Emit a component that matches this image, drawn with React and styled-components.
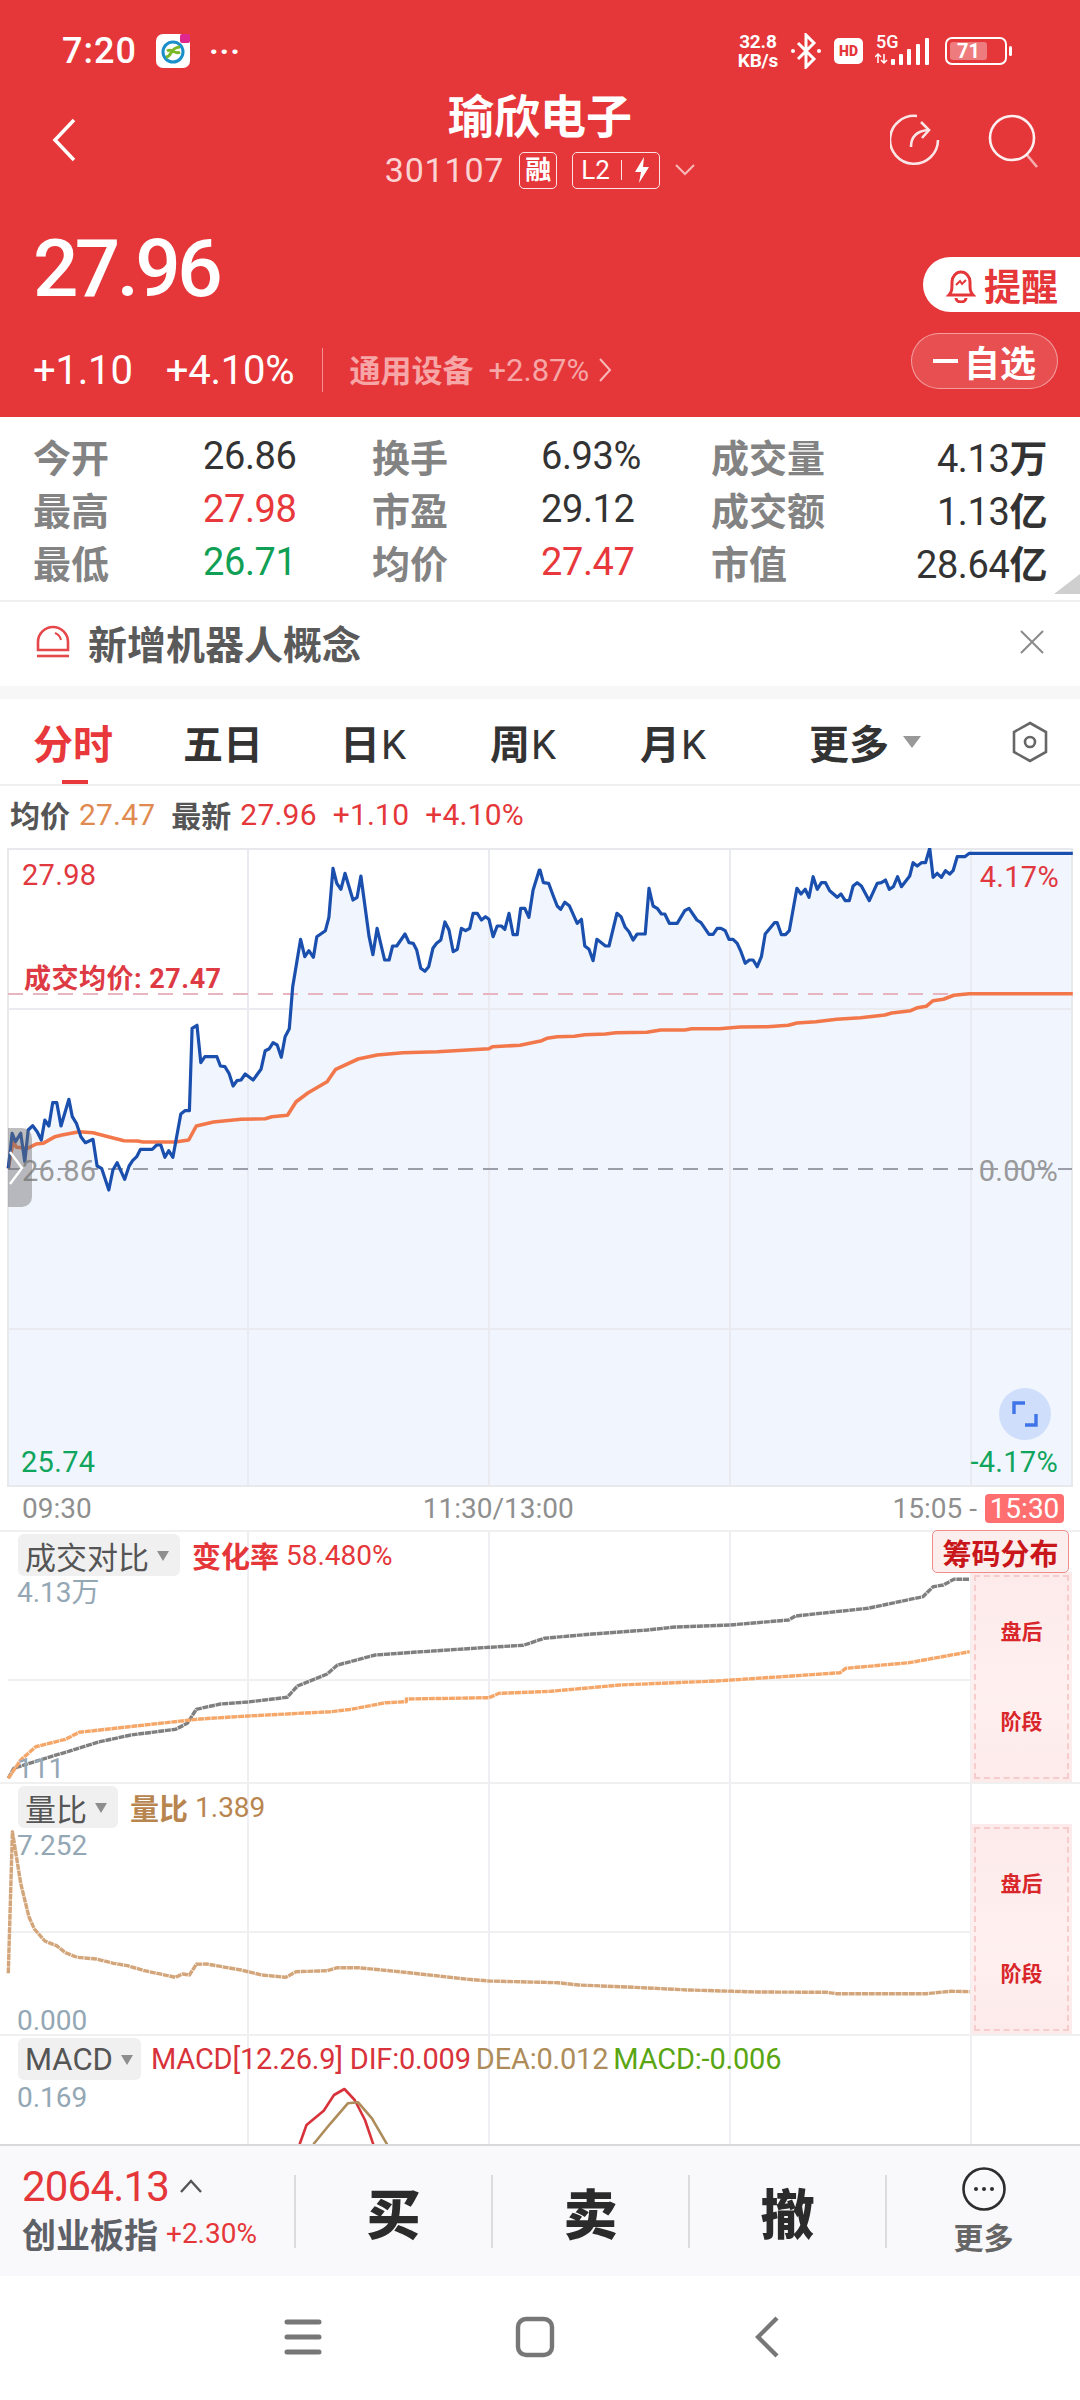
import React from 'react'
import styled, { createGlobalStyle } from 'styled-components'

const RED = '#e5373a'
const FONT = 'Roboto, "Noto Sans CJK SC", sans-serif'

const GlobalStyle = createGlobalStyle`
    html, body { margin: 0; padding: 0; background: #fff; }
    * { box-sizing: border-box; }
`

// traced from the chart, in zoom units: x / 2.9, y / 3
const blueA = [[24,985],[35,880],[45,905],[60,880],[72,965],[82,870],[95,857],[108,875],[120,900],[130,840],[142,858],[153,788],[165,788],[177,858],[200,778],[210,830],[222,850],[235,890],[248,908],[270,898],[282,978],[295,985],[316,1050],[328,990],[340,968],[362,1018],[375,978],[385,962],[397,950],[408,928],[442,928],[455,915],[467,915],[479,952],[490,932],[502,952],[525,822],[537,812],[550,812],[558,565],[572,556],[583,668],[595,650],[630,650],[640,678],[653,680],[665,700],[677,738],[688,722],[700,720],[712,702],[735,720],[758,688],[770,632],[782,626],[793,608],[805,615],[817,652],[828,590],[840,566],[850,440],[873,298],[885,350],[897,332],[910,352],[920,290],[945,272],[955,232],[967,85],[978,130],[990,148],[1002,100],[1025,180],[1037,172],[1048,108],[1072,290],[1083,344],[1095,265],[1117,360],[1130,360],[1140,318],[1152,318],[1176,282],[1188,308],[1200,310],[1210,330],[1222,385],[1234,394],[1245,380],[1257,325],[1268,310],[1280,300],[1292,246],[1304,270],[1316,335],[1328,328],[1340,265],[1352,272],[1364,265],[1374,220],[1386,220],[1398,240],[1410,230],[1420,238],[1432,290],[1444,258],[1456,258],[1466,268],[1478,220],[1490,284],[1502,284],[1512,205],[1524,205],[1536,232],[1548,150],[1566,90]]
const blueB = [[0,90],[10,128],[25,130],[40,172],[50,198],[60,208],[72,187],[85,197],[108,250],[120,238],[130,318],[142,328],[154,362],[165,298],[190,318],[200,318],[223,220],[235,230],[247,262],[258,275],[270,300],[282,282],[305,282],[316,145],[328,198],[340,205],[352,222],[362,222],[375,250],[398,250],[420,212],[432,205],[455,240],[467,248],[490,283],[502,283],[514,265],[525,265],[537,272],[548,298],[560,298],[572,310],[583,335],[595,370],[607,360],[618,360],[630,380],[642,350],[653,282],[680,248],[688,248],[700,284],[712,284],[723,272],[745,145],[757,162],[769,148],[780,172],[792,110],[804,148],[816,128],[828,128],[840,152],[862,172],[873,162],[885,182],[897,182],[908,138],[920,128],[932,138],[955,182],[978,130],[990,128],[1002,120],[1013,148],[1025,140],[1037,110],[1048,140],[1072,108],[1082,68],[1094,78],[1106,68],[1118,68],[1130,25],[1140,112],[1152,100],[1164,112],[1176,92],[1188,102],[1198,92],[1210,50],[1232,50],[1245,40],[1545,40]]
const avgA = [[24,985],[38,905],[48,922],[80,925],[105,912],[125,910],[160,890],[180,885],[230,875],[270,878],[320,892],[360,902],[400,903],[415,906],[510,906],[548,900],[570,858],[620,846],[700,838],[770,836],[790,830],[835,826],[860,785],[895,758],[950,725],[975,688],[1040,657],[1095,645],[1170,638],[1270,635],[1420,626],[1430,620],[1510,616],[1566,604]]
const avgB = [[0,604],[20,595],[50,590],[100,589],[130,584],[190,582],[220,578],[310,577],[350,570],[420,570],[440,566],[520,566],[580,561],[660,560],[720,556],[745,549],[800,545],[860,538],[930,533],[1000,525],[1020,519],[1075,512],[1095,503],[1120,499],[1140,482],[1170,478],[1200,466],[1245,461],[1545,461]]

const ratioGrey = [[12,775],[20,745],[50,725],[90,700],[145,665],[190,645],[255,628],[272,610],[285,568],[320,552],[360,546],[417,532],[432,498],[475,462],[490,435],[545,405],[600,397],[710,382],[760,376],[790,355],[860,342],[940,330],[980,321],[1060,315],[1145,300],[1155,288],[1260,265],[1340,230],[1355,200],[1370,195],[1385,178],[1408,178]]
const ratioOrange = [[12,775],[30,720],[52,680],[95,658],[115,637],[210,615],[290,597],[360,588],[480,575],[510,568],[560,548],[590,545],[590,537],[710,533],[725,520],[800,514],[900,495],[1040,483],[1150,468],[1220,458],[1228,445],[1320,428],[1408,395]]
const volume = [[12,580],[18,155],[30,310],[42,410],[50,447],[65,483],[82,497],[95,518],[112,532],[140,537],[165,550],[185,557],[210,572],[255,592],[265,582],[275,585],[285,553],[300,552],[350,570],[380,585],[415,592],[430,575],[475,572],[490,563],[520,563],[580,575],[680,598],[710,603],[810,608],[840,615],[920,622],[1000,630],[1100,636],[1200,637],[1215,641],[1345,641],[1380,634],[1408,635]]
const macdRed = [[435,313],[445,255],[470,212],[485,165],[500,147],[515,180],[530,240],[542,313]]
const macdTan = [[455,313],[480,250],[505,190],[520,187],[540,235],[562,313]]

const toPoints = (list, sx, ox, oy) =>
    list.map(([x, y]) => `${(ox + x / sx).toFixed(1)},${(oy + y / 3).toFixed(1)}`).join(' ')

const pricePoints = toPoints(blueA, 2.904, 0, -8) + ' ' + toPoints(blueB, 2.9, 540, -8)
const avgPoints = toPoints(avgA, 2.904, 0, -8) + ' ' + toPoints(avgB, 2.9, 540, -8)

const stats = [
    ['今开', '26.86', '#333', '换手', '6.93%', '#333', '成交量', '4.13', '万'],
    ['最高', '27.98', '#e8383b', '市盈', '29.12', '#333', '成交额', '1.13', '亿'],
    ['最低', '26.71', '#10a055', '均价', '27.47', '#e8383b', '市值', '28.64', '亿'],
]

const gridX = [248, 489, 730, 971]

function Caret() {
    return <svg width="14" height="14" viewBox="0 0 14 14"><path d="M1 3h12L7 13z" fill="#8e8e8e" /></svg>
}

function AfterHours() {
    return (
        <ClosedBox>
            <span>盘后</span>
            <span>阶段</span>
        </ClosedBox>
    )
}

function Lines({ height, midY, lines, right = 1072 }) {
    return (
        <ChartSvg width="1080" height={height} viewBox={`0 0 1080 ${height}`}>
            {gridX.map(x => <line key={x} x1={x} x2={x} y1="0" y2={height} stroke="#eeeff2" strokeWidth="2" />)}
            {midY && <line x1="8" x2={right} y1={midY} y2={midY} stroke="#f0f0f0" strokeWidth="2" />}
            {lines.map(l => (
                <polyline key={l.color} points={l.points} fill="none" stroke={l.color} strokeWidth={l.width} strokeDasharray={l.dash} strokeLinejoin="round" />
            ))}
        </ChartSvg>
    )
}

export default function App() {
    return (
        <Page>
            <GlobalStyle />
            <Header>
                <StatusBar>
                    <Clock>7:20</Clock>
                    <svg width="34" height="34" viewBox="0 0 34 34">
                        <rect width="34" height="34" rx="7" fill="#fff" />
                        <circle cx="17" cy="18" r="10" fill="none" stroke="#1b8fc9" strokeWidth="3" />
                        <path d="M10 23c6 0 4-10 14-10M11 17c5-3 8 4 13 1" fill="none" stroke="#7ab829" strokeWidth="3" />
                        <rect x="24" y="0" width="10" height="9" rx="2" fill="#e0278f" />
                    </svg>
                    <Dots>···</Dots>
                    <StatusRight>
                        <NetSpeed>
                            <NetLine>32.8</NetLine>
                            <NetLine>KB/s</NetLine>
                        </NetSpeed>
                        <svg width="32" height="36" viewBox="0 0 32 36" fill="none" stroke="#fff" strokeWidth="3">
                            <path d="M8 10l16 16-8 8V2l8 8L8 26" />
                            <circle cx="3" cy="18" r="2" fill="#fff" stroke="none" />
                            <circle cx="29" cy="18" r="2" fill="#fff" stroke="none" />
                        </svg>
                        <HdBadge>HD</HdBadge>
                        <SignalBlock>
                            <FiveG>5G</FiveG>
                            <svg width="58" height="30" viewBox="0 0 58 30">
                                <path d="M3 16v9M0 19l3-3 3 3M9 25v-9M6 22l3 3 3-3" stroke="#fff" strokeWidth="1.5" fill="none" />
                                <g fill="#fff">
                                    <rect x="16" y="21" width="4" height="6" rx="1" />
                                    <rect x="24" y="16" width="4" height="11" rx="1" />
                                    <rect x="32" y="11" width="4" height="16" rx="1" />
                                    <rect x="41" y="6" width="4" height="21" rx="1" />
                                    <rect x="50" y="0" width="4" height="27" rx="1" />
                                </g>
                            </svg>
                        </SignalBlock>
                        <Battery><BatteryFill>71</BatteryFill></Battery>
                    </StatusRight>
                </StatusBar>
                <NavRow>
                    <NavSide>
                        <svg width="24" height="44" viewBox="0 0 24 44" fill="none" stroke="#fff" strokeWidth="3.5">
                            <path d="M22 2L3 22l19 20" />
                        </svg>
                    </NavSide>
                    <TitleBlock>
                        <Title>瑜欣电子</Title>
                        <CodeRow>
                            <Code>301107</Code>
                            <RongBadge>融</RongBadge>
                            <LevelBadge>
                                <span>L2</span>
                                <LevelBar />
                                <svg width="18" height="26" viewBox="0 0 18 26"><path d="M11 0L2 15h6l-2 11 10-16h-6z" fill="#fff" /></svg>
                            </LevelBadge>
                            <svg width="20" height="12" viewBox="0 0 20 12" fill="none" stroke="#f7b9b9" strokeWidth="2"><path d="M1 1l9 9 9-9" /></svg>
                        </CodeRow>
                    </TitleBlock>
                    <NavActions>
                        <svg width="50" height="52" viewBox="0 0 50 52" fill="none" stroke="#fff" strokeWidth="2.6" opacity="0.88">
                            <path d="M27 2A24 24 0 1 0 48 26" />
                            <path d="M21 33c0-10 6-16 17-17" />
                            <path d="M31 8l8 8-7 8" />
                        </svg>
                        <svg width="52" height="54" viewBox="0 0 52 54" fill="none" stroke="#fff" strokeWidth="2.6">
                            <circle cx="24" cy="24" r="22" opacity="0.92" />
                            <path d="M39 41l10 12" opacity="0.6" />
                        </svg>
                    </NavActions>
                </NavRow>
                <QuoteRow>
                    <QuoteLeft>
                        <Price>27.96</Price>
                        <ChangeRow>
                            <Change>+1.10</Change>
                            <Change>+4.10%</Change>
                            <ChangeBar />
                            <Sector>通用设备</Sector>
                            <SectorPct>+2.87%</SectorPct>
                            <svg width="13" height="24" viewBox="0 0 13 24" fill="none" stroke="#f7b9b9" strokeWidth="2"><path d="M1 1l10 11L1 23" /></svg>
                        </ChangeRow>
                    </QuoteLeft>
                    <QuoteRight>
                        <RemindPill>
                            <svg width="30" height="36" viewBox="0 0 30 36" fill="none" stroke={RED} strokeWidth="3">
                                <path d="M3 28c3-3 3-6 3-13a9 10 0 0 1 18 0c0 7 0 10 3 13z" />
                                <path d="M10 31a5 4 0 0 0 10 0" />
                                <path d="M10 18l4-4 2 3 4-4" strokeWidth="2" />
                            </svg>
                            提醒
                        </RemindPill>
                        <WatchPill><MinusMark />自选</WatchPill>
                    </QuoteRight>
                </QuoteRow>
            </Header>

            <StatsGrid>
                {stats.map(r => (
                    <React.Fragment key={r[0]}>
                        <StatLabel>{r[0]}</StatLabel>
                        <StatValue $color={r[2]}>{r[1]}</StatValue>
                        <StatLabel>{r[3]}</StatLabel>
                        <StatValue $color={r[5]}>{r[4]}</StatValue>
                        <StatLabel>{r[6]}</StatLabel>
                        <StatTotal>{r[7]}<StatUnit>{r[8]}</StatUnit></StatTotal>
                    </React.Fragment>
                ))}
                <CornerMark />
            </StatsGrid>

            <Notice>
                <svg width="34" height="34" viewBox="0 0 34 34" fill="none" stroke="#e5474b" strokeWidth="2.6">
                    <path d="M2 25V17a15 15 0 0 1 30 0v8z" />
                    <path d="M19 8c3 1 5 3 6 7" strokeWidth="2" />
                    <path d="M1 31h32" />
                </svg>
                <NoticeText>新增机器人概念</NoticeText>
                <svg width="26" height="24" viewBox="0 0 26 24" fill="none" stroke="#8a8a8a" strokeWidth="2"><path d="M2 1l22 22M24 1L2 23" /></svg>
            </Notice>
            <Gap />

            <Tabs>
                <Tab $active><span>分时</span></Tab>
                <Tab><span>五日</span></Tab>
                <Tab><span>日<TabLetter>K</TabLetter></span></Tab>
                <Tab><span>周<TabLetter>K</TabLetter></span></Tab>
                <Tab><span>月<TabLetter>K</TabLetter></span></Tab>
                <MoreTab>更多<svg width="18" height="14" viewBox="0 0 18 14"><path d="M0 1h18L9 13z" fill="#999" /></svg></MoreTab>
                <HexButton>
                    <svg width="38" height="42" viewBox="0 0 38 42" fill="none" stroke="#666" strokeWidth="2.6">
                        <path d="M19 2l16 9v20l-16 9-16-9V11z" />
                        <circle cx="19" cy="21" r="5" />
                    </svg>
                </HexButton>
            </Tabs>

            <InfoLine>
                <InfoName>均价</InfoName>
                <InfoNum $color="#e08a4f">27.47</InfoNum>
                <InfoName>最新</InfoName>
                <InfoNum>27.96</InfoNum>
                <InfoNum>+1.10</InfoNum>
                <InfoNum>+4.10%</InfoNum>
            </InfoLine>

            <MainChart>
                <ChartSvg width="1080" height="639" viewBox="0 0 1080 639">
                    <polygon points={`8,639 ${pricePoints} 1072,639`} fill="#f0f5fe" />
                    {gridX.map(x => <line key={x} x1={x} x2={x} y1="0" y2="639" stroke="#e9ebf0" strokeWidth="2" />)}
                    {[161, 481].map(y => <line key={y} x1="8" x2="1072" y1={y} y2={y} stroke="#e9ebf0" strokeWidth="2" />)}
                    <rect x="8" y="1" width="1064" height="637" fill="none" stroke="#e8e9ec" strokeWidth="2" />
                    <line x1="8" x2="1072" y1="146" y2="146" stroke="#e8b4bf" strokeWidth="2" strokeDasharray="15 10" />
                    <line x1="8" x2="1072" y1="321" y2="321" stroke="#9b9ea8" strokeWidth="2" strokeDasharray="15 10" />
                    <polyline points={avgPoints} fill="none" stroke="#f2784b" strokeWidth="3.6" strokeLinejoin="round" />
                    <polyline points={pricePoints} fill="none" stroke="#1a4fae" strokeWidth="3.2" strokeLinejoin="round" />
                </ChartSvg>
                <ChartLabel $left={22} $top={10} $color="#e0383e">27.98</ChartLabel>
                <ChartLabel $right={21} $top={12} $color="#e0383e">4.17%</ChartLabel>
                <AvgLabel>成交均价: 27.47</AvgLabel>
                <ChartLabel $left={22} $top={306} $color="#999">26.86</ChartLabel>
                <ChartLabel $right={22} $top={306} $color="#999">0.00%</ChartLabel>
                <ChartLabel $left={21} $top={597} $color="#0fa55d">25.74</ChartLabel>
                <ChartLabel $right={22} $top={597} $color="#0fa55d">-4.17%</ChartLabel>
                <SideHandle>
                    <svg width="16" height="36" viewBox="0 0 16 36" fill="none" stroke="#fff" strokeWidth="2.4"><path d="M2 2l12 16L2 34" /></svg>
                </SideHandle>
                <ExpandButton>
                    <svg width="26" height="26" viewBox="0 0 26 26" fill="none" stroke="#3f74e8" strokeWidth="3.4"><path d="M2 13V2h11M24 13v11H13" /></svg>
                </ExpandButton>
            </MainChart>

            <TimeAxis>
                <TimeText>09:30</TimeText>
                <TimeMiddle>11:30/13:00</TimeMiddle>
                <TimeText>15:05 -</TimeText>
                <TimeTag>15:30</TimeTag>
            </TimeAxis>

            <SubPanel $height={252}>
                <Lines
                    height={252}
                    midY={148}
                    right={971}
                    lines={[
                        { color: '#7f7f7f', points: toPoints(ratioGrey, 1.452, 0, -12), width: 3.4, dash: '6 0.7' },
                        { color: '#f5a76a', points: toPoints(ratioOrange, 1.452, 0, -12), width: 3.4, dash: '6 0.7' },
                    ]}
                />
                <PanelHead>
                    <Selector $width={162}>成交对比<Caret /></Selector>
                    <HeadName $color="#e5373a">变化率</HeadName>
                    <HeadNum $color="#e5373a">58.480%</HeadNum>
                </PanelHead>
                <ScaleLabel $top={48}>4.13万</ScaleLabel>
                <ScaleLabel $top={224}>111</ScaleLabel>
                <AfterHours />
                <ChipButton>筹码分布</ChipButton>
            </SubPanel>

            <SubPanel $height={252}>
                <Lines
                    height={252}
                    midY={148}
                    right={971}
                    lines={[{ color: '#d3a57a', points: toPoints(volume, 1.452, 0, -4), width: 3.4, dash: '6 0.7' }]}
                />
                <PanelHead>
                    <Selector $width={100}>量比<Caret /></Selector>
                    <HeadName $color="#b8854f">量比</HeadName>
                    <HeadNum $color="#b8854f">1.389</HeadNum>
                </PanelHead>
                <ScaleLabel $top={49}>7.252</ScaleLabel>
                <ScaleLabel $top={224}>0.000</ScaleLabel>
                <AfterHours />
            </SubPanel>

            <SubPanel $height={110}>
                <Lines
                    height={110}
                    lines={[
                        { color: '#d8323a', points: toPoints(macdRed, 1.452, 0, 4), width: 2.6 },
                        { color: '#ae8c5a', points: toPoints(macdTan, 1.452, 0, 4), width: 2.6 },
                    ]}
                />
                <PanelHead $gap={5}>
                    <Selector $width={123}>MACD<Caret /></Selector>
                    <MacdText $color="#d8323a">MACD[12.26.9] DIF:0.009</MacdText>
                    <MacdText $color="#ae8c5a">DEA:0.012</MacdText>
                    <MacdText $color="#5aa512">MACD:-0.006</MacdText>
                </PanelHead>
                <ScaleLabel $top={49}>0.169</ScaleLabel>
            </SubPanel>

            <BottomBar>
                <IndexBlock>
                    <IndexTop>
                        <IndexValue>2064.13</IndexValue>
                        <svg width="24" height="14" viewBox="0 0 24 14" fill="none" stroke="#555" strokeWidth="2.4"><path d="M2 13L12 2l10 11" /></svg>
                    </IndexTop>
                    <IndexBottom>
                        <IndexName>创业板指</IndexName>
                        <IndexPct>+2.30%</IndexPct>
                    </IndexBottom>
                </IndexBlock>
                <TradeButton>买</TradeButton>
                <TradeButton>卖</TradeButton>
                <TradeButton>撤</TradeButton>
                <MoreButton>
                    <svg width="44" height="44" viewBox="0 0 44 44" fill="none" stroke="#2d2d2d" strokeWidth="2.6">
                        <circle cx="22" cy="22" r="20.5" />
                        <g fill="#2d2d2d" stroke="none">
                            <circle cx="14" cy="22" r="2" />
                            <circle cx="22" cy="22" r="2" />
                            <circle cx="30" cy="22" r="2" />
                        </g>
                    </svg>
                    <MoreLabel>更多</MoreLabel>
                </MoreButton>
            </BottomBar>

            <SystemNav>
                <NavCell>
                    <svg width="38" height="36" viewBox="0 0 38 36" stroke="#777" strokeWidth="5" strokeLinecap="round">
                        <path d="M3 3h32M3 18h32M3 33h32" />
                    </svg>
                </NavCell>
                <NavCell>
                    <svg width="40" height="42" viewBox="0 0 40 42" fill="none" stroke="#777" strokeWidth="4.4"><rect x="3" y="3" width="34" height="36" rx="8" /></svg>
                </NavCell>
                <NavCell>
                    <svg width="24" height="42" viewBox="0 0 24 42" fill="none" stroke="#777" strokeWidth="4.4"><path d="M22 2L3 21l19 19" /></svg>
                </NavCell>
            </SystemNav>
        </Page>
    )
}

const Page = styled.div`
    width: 1080px;
    height: 2400px;
    overflow: hidden;
    display: flex;
    flex-direction: column;
    background: #fff;
    font-family: ${FONT};
`

const Header = styled.header`
    height: 417px;
    flex: none;
    display: flex;
    flex-direction: column;
    background: ${RED};
    color: #fff;
`

const StatusBar = styled.div`
    height: 84px;
    padding: 18px 69px 0 62px;
    display: flex;
    align-items: center;
    gap: 19px;
`

const Clock = styled.span`
    font-size: 36px;
    font-weight: 500;
    letter-spacing: 1px;
`

const Dots = styled.span`
    font-size: 32px;
    font-weight: 700;
    letter-spacing: 1px;
`

const StatusRight = styled.div`
    margin-left: auto;
    display: flex;
    align-items: center;
    gap: 12px;
`

const NetSpeed = styled.div`
    display: flex;
    flex-direction: column;
    gap: 1px;
    text-align: center;
`

const NetLine = styled.span`
    font-size: 19px;
    line-height: 18px;
    font-weight: 700;
    letter-spacing: -0.2px;
`

const HdBadge = styled.div`
    width: 29px;
    height: 26px;
    border-radius: 5px;
    background: #fff;
    color: ${RED};
    font-size: 14px;
    font-weight: 900;
    line-height: 26px;
    text-align: center;
`

const SignalBlock = styled.div`
    position: relative;
    width: 58px;
    height: 30px;
    margin-top: 4px;
`

const FiveG = styled.span`
    position: absolute;
    left: 1px;
    top: -6px;
    font-size: 18px;
    line-height: 20px;
    font-weight: 500;
`

const Battery = styled.div`
    position: relative;
    width: 62px;
    height: 28px;
    padding: 3px;
    margin-right: 4px;
    border: 2px solid #fff;
    border-radius: 7px;

    &::after {
        content: '';
        position: absolute;
        right: -7px;
        top: 7px;
        width: 3px;
        height: 10px;
        background: #fff;
        border-radius: 2px;
    }
`

const BatteryFill = styled.div`
    width: 71%;
    height: 100%;
    border-radius: 3px;
    background: rgba(255, 255, 255, 0.35);
    font-size: 20px;
    line-height: 18px;
    font-weight: 700;
    text-align: center;
`

const NavRow = styled.div`
    height: 106px;
    flex: none;
    display: grid;
    grid-template-columns: 1fr auto 1fr;
    padding: 8px 40px 0;
`

const NavSide = styled.div`
    padding: 26px 0 0 12px;
`

const TitleBlock = styled.div`
    display: flex;
    flex-direction: column;
    align-items: center;
`

const Title = styled.div`
    font-size: 46px;
    line-height: 50px;
    font-weight: 700;
`

const CodeRow = styled.div`
    margin-top: 8px;
    display: flex;
    align-items: center;
    gap: 15px;
`

const Code = styled.span`
    font-size: 34px;
    color: #fbd3d3;
    letter-spacing: 0.8px;
`

const RongBadge = styled.span`
    width: 38px;
    height: 37px;
    border: 1.5px solid #fbe3e3;
    border-radius: 5px;
    font-size: 26px;
    line-height: 34px;
    font-weight: 700;
    text-align: center;
`

const LevelBadge = styled.span`
    width: 88px;
    height: 37px;
    border: 1.5px solid #fbe3e3;
    border-radius: 5px;
    display: flex;
    align-items: center;
    justify-content: space-between;
    padding: 0 8px;
    font-size: 26px;
`

const LevelBar = styled.i`
    width: 1px;
    height: 20px;
    background: #fbe3e3;
`

const NavActions = styled.div`
    display: flex;
    justify-content: flex-end;
    align-items: flex-start;
    gap: 48px;
    padding-top: 22px;
`

const QuoteRow = styled.div`
    flex: 1;
    display: flex;
    justify-content: space-between;
    padding-left: 33px;
`

const QuoteLeft = styled.div`
    display: flex;
    flex-direction: column;
`

const Price = styled.div`
    margin-top: 39px;
    font-size: 80px;
    line-height: 80px;
    font-weight: 500;
    letter-spacing: -3.6px;
`

const ChangeRow = styled.div`
    margin-top: 38px;
    height: 46px;
    display: flex;
    align-items: center;
`

const Change = styled.span`
    font-size: 40px;
    letter-spacing: -0.2px;
    margin-right: 33px;
`

const ChangeBar = styled.i`
    width: 1px;
    height: 44px;
    margin-right: 26px;
    margin-left: -5px;
    background: rgba(255, 255, 255, 0.45);
`

const Sector = styled.span`
    margin-bottom: 3px;
    font-size: 31px;
    font-weight: 700;
    color: #f6a6a7;
    margin-right: 15px;
`

const SectorPct = styled.span`
    font-size: 31px;
    color: #f6a6a7;
    margin-right: 10px;
`

const QuoteRight = styled.div`
    display: flex;
    flex-direction: column;
    align-items: flex-end;
    padding-top: 67px;
`

const RemindPill = styled.div`
    width: 157px;
    height: 55px;
    padding-left: 23px;
    display: flex;
    align-items: center;
    gap: 8px;
    background: #fff;
    border-radius: 28px 0 0 28px;
    color: ${RED};
    font-size: 37px;
    font-weight: 700;
`

const WatchPill = styled.div`
    width: 147px;
    height: 56px;
    margin: 21px 22px 0 0;
    display: flex;
    align-items: center;
    justify-content: center;
    gap: 6px;
    border: 1.5px solid rgba(255, 255, 255, 0.45);
    border-radius: 28px;
    background: rgba(255, 255, 255, 0.12);
    font-size: 36px;
    font-weight: 700;
`

const MinusMark = styled.i`
    width: 25px;
    height: 4px;
    background: #fff;
`

const StatsGrid = styled.section`
    position: relative;
    height: 185px;
    flex: none;
    padding: 12px 33px 0;
    display: grid;
    grid-template-columns: 170px 169px 169px 170px 150px 1fr;
    grid-auto-rows: 53px;
    align-items: center;
    border-bottom: 2px solid #efefef;
`

const StatLabel = styled.span`
    font-size: 38px;
    font-weight: 700;
    color: #838383;
`

const StatValue = styled.span`
    font-size: 38px;
    letter-spacing: -0.4px;
    color: ${p => p.$color};
`

const StatTotal = styled.span`
    font-size: 38px;
    letter-spacing: -0.4px;
    color: #333;
    text-align: right;
`

const StatUnit = styled.span`
    font-weight: 700;
`

const CornerMark = styled.i`
    position: absolute;
    right: 0;
    bottom: 6px;
    width: 26px;
    height: 20px;
    background: #cfcfcf;
    clip-path: polygon(100% 0, 100% 100%, 0 100%);
`

const Notice = styled.div`
    height: 84px;
    flex: none;
    display: flex;
    align-items: center;
    padding: 0 35px 4px 36px;
`

const NoticeText = styled.span`
    flex: 1;
    margin-left: 18px;
    font-size: 39px;
    font-weight: 700;
    color: #5a5a5a;
`

const Gap = styled.div`
    height: 13px;
    flex: none;
    background: #f7f7f7;
`

const Tabs = styled.nav`
    height: 87px;
    flex: none;
    display: flex;
    align-items: center;
    border-bottom: 2px solid #efefef;
`

const Tab = styled.div`
    position: relative;
    width: 150px;
    height: 100%;
    padding-right: 4px;
    display: flex;
    align-items: center;
    justify-content: center;
    font-size: 40px;
    font-weight: 700;
    color: ${p => (p.$active ? '#e8383b' : '#333')};

    &::after {
        content: '';
        display: ${p => (p.$active ? 'block' : 'none')};
        position: absolute;
        left: 62px;
        bottom: 0;
        width: 26px;
        height: 4px;
        background: #e8383b;
    }
`

const TabLetter = styled.span`
    font-weight: 400;
    margin-left: 1px;
`

const MoreTab = styled.div`
    margin-left: 59px;
    display: flex;
    align-items: center;
    gap: 14px;
    font-size: 40px;
    font-weight: 700;
    color: #333;
`

const HexButton = styled.div`
    margin-left: auto;
    padding-right: 31px;
    display: flex;
`

const InfoLine = styled.div`
    height: 62px;
    flex: none;
    padding: 0 0 6px 10px;
    display: flex;
    align-items: center;
`

const InfoName = styled.span`
    font-size: 30px;
    font-weight: 700;
    color: #555;
    margin-right: 9px;
`

const InfoNum = styled.span`
    font-size: 30px;
    letter-spacing: 0.2px;
    color: ${p => p.$color || '#e5373a'};
    margin-right: 16px;
`

const MainChart = styled.section`
    position: relative;
    height: 639px;
    flex: none;
`

const ChartSvg = styled.svg`
    position: absolute;
    left: 0;
    top: 0;
    display: block;
`

const ChartLabel = styled.span`
    position: absolute;
    ${p => (p.$left !== undefined ? `left: ${p.$left}px;` : `right: ${p.$right}px;`)}
    top: ${p => p.$top}px;
    font-size: 29px;
    line-height: 34px;
    letter-spacing: 0.3px;
    color: ${p => p.$color};
`

const AvgLabel = styled.span`
    position: absolute;
    left: 24px;
    top: 114px;
    font-size: 27px;
    line-height: 34px;
    font-weight: 700;
    letter-spacing: 0.5px;
    color: #dd3a44;
`

const SideHandle = styled.div`
    position: absolute;
    left: 8px;
    top: 280px;
    width: 24px;
    height: 79px;
    display: flex;
    align-items: center;
    background: rgba(110, 110, 110, 0.45);
    border-radius: 0 10px 10px 0;
`

const ExpandButton = styled.div`
    position: absolute;
    left: 999px;
    top: 540px;
    width: 52px;
    height: 52px;
    display: flex;
    align-items: center;
    justify-content: center;
    border-radius: 50%;
    background: #cfdffb;
`

const TimeAxis = styled.div`
    height: 43px;
    flex: none;
    display: flex;
    align-items: center;
    padding: 0 16px 0 22px;
`

const TimeText = styled.span`
    font-size: 28px;
    color: #8f8f8f;
`

const TimeMiddle = styled(TimeText)`
    margin: 0 auto 0 331px;
`

const TimeTag = styled.span`
    margin-left: 8px;
    width: 79px;
    height: 29px;
    border-radius: 4px;
    background: #ff6f70;
    color: #fff;
    font-size: 28px;
    line-height: 29px;
    text-align: center;
`

const SubPanel = styled.section`
    position: relative;
    height: ${p => p.$height}px;
    flex: none;
    border-top: 2px solid #f0f0f0;
`

const PanelHead = styled.div`
    position: absolute;
    left: 18px;
    top: 2px;
    display: flex;
    align-items: center;
    gap: ${p => p.$gap || 7}px;
`

const Selector = styled.div`
    width: ${p => p.$width}px;
    height: 42px;
    padding-left: 7px;
    margin-right: 5px;
    display: flex;
    align-items: center;
    gap: 7px;
    border-radius: 6px;
    background: #f0f0f0;
    font-size: 31px;
    color: #555;
`

const HeadName = styled.span`
    font-size: 29px;
    font-weight: 700;
    color: ${p => p.$color};
`

const HeadNum = styled.span`
    font-size: 28px;
    color: ${p => p.$color};
`

const MacdText = styled.span`
    font-size: 29px;
    letter-spacing: -0.2px;
    color: ${p => p.$color};
`

const ScaleLabel = styled.span`
    position: absolute;
    left: 17px;
    top: ${p => p.$top}px;
    font-size: 28px;
    line-height: 26px;
    color: #94a7b5;
`

const ChipButton = styled.div`
    position: absolute;
    left: 932px;
    top: -2px;
    width: 137px;
    height: 43px;
    display: flex;
    align-items: center;
    justify-content: center;
    border: 1.5px solid #ef8c8c;
    border-radius: 5px;
    background: #fdeeee;
    color: #c9161b;
    font-size: 29px;
    font-weight: 700;
`

const ClosedBox = styled.div`
    position: absolute;
    left: 971px;
    top: 40px;
    width: 101px;
    height: 210px;
    padding: 46px 0;
    display: flex;
    flex-direction: column;
    align-items: center;
    justify-content: space-between;
    background: linear-gradient(#fdeaea, #fff0f0 60%, #fdeaea);
    outline: 2px dashed #f7cccc;
    outline-offset: -5px;
    color: #d9262b;
    font-size: 21px;
    line-height: 28px;
    font-weight: 700;
`

const BottomBar = styled.footer`
    height: 132px;
    flex: none;
    display: flex;
    align-items: center;
    position: relative;
    background: #f9f9fb;
    border-top: 2px solid #d9d9d9;
`

const IndexBlock = styled.div`
    width: 294px;
    padding-left: 22px;
`

const IndexTop = styled.div`
    display: flex;
    align-items: center;
    gap: 10px;
    height: 44px;
`

const IndexValue = styled.span`
    font-size: 42px;
    letter-spacing: -0.8px;
    color: #e5373a;
`

const IndexBottom = styled.div`
    display: flex;
    align-items: center;
    gap: 8px;
    height: 50px;
`

const IndexName = styled.span`
    font-size: 34px;
    font-weight: 700;
    color: #5e6068;
`

const IndexPct = styled.span`
    font-size: 28px;
    color: #e5373a;
`

const TradeButton = styled.div`
    width: 197px;
    height: 73px;
    display: flex;
    align-items: center;
    justify-content: center;
    border-left: 2px solid #dcdcdc;
    font-size: 54px;
    font-weight: 900;
    color: #2b2b2b;
`

const MoreButton = styled.div`
    flex: 1;
    height: 73px;
    display: flex;
    flex-direction: column;
    align-items: center;
    border-left: 2px solid #dcdcdc;
    position: relative;

    svg {
        position: absolute;
        top: -8px;
    }
`

const MoreLabel = styled.span`
    position: absolute;
    top: 44px;
    font-size: 30px;
    line-height: 40px;
    font-weight: 700;
    color: #666;
`

const SystemNav = styled.div`
    flex: 1;
    display: flex;
    align-items: center;
    justify-content: center;
    padding: 0 10px 0 0;
    margin-top: -2px;
`

const NavCell = styled.div`
    width: 232px;
    display: flex;
    justify-content: center;
`
